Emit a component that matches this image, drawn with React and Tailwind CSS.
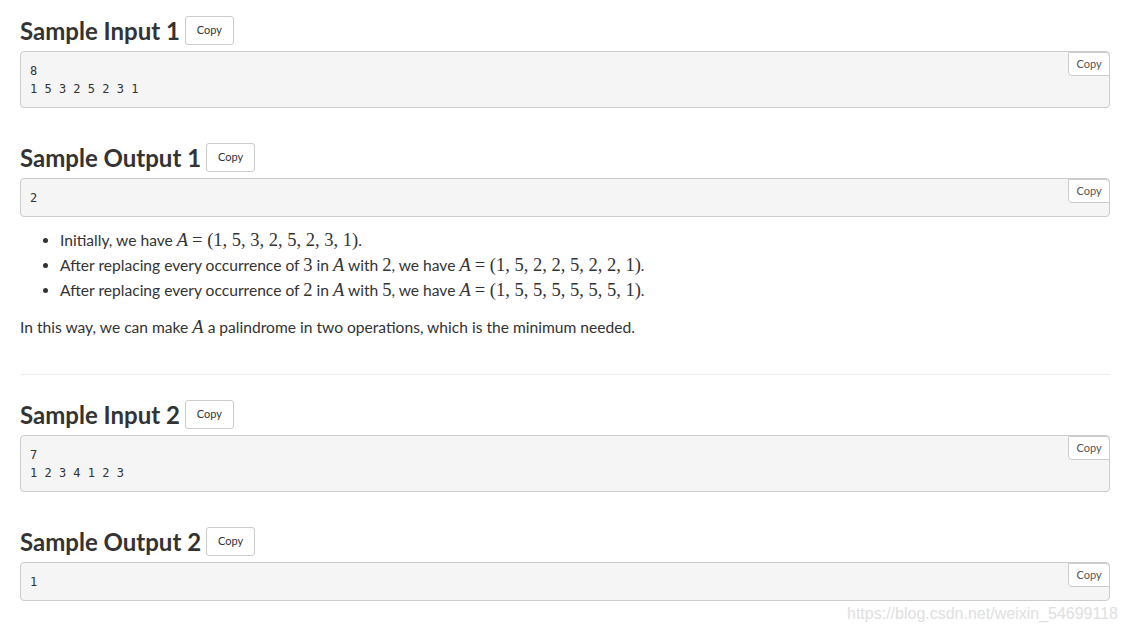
import React from "react";

const mathFont = { fontFamily: '"Liberation Serif", "DejaVu Serif", serif' };

const M = ({ children }) => (
    <span className="text-[18.5px] leading-none" style={mathFont}>
        {children}
    </span>
);

const V = ({ children }) => <i className="text-[18.5px] leading-none font-['Liberation_Serif',serif]">{children}</i>;

const CopyButton = () => (
    <button className="h-[29px] px-[11px] bg-white border border-[#cccccc] rounded-[3px] text-[11px] text-[#333333]">
        Copy
    </button>
);

const SampleBox = ({ lines }) => (
    <div className="relative mt-[6px] bg-[#f5f5f5] border border-[#cccccc] rounded-[4px] px-[9px] pt-[10px] pb-[9px]">
        <pre className="font-['DejaVu_Sans_Mono',monospace] text-[12px] leading-[18px] text-[#333333] m-0">
            {lines.join("\n")}
        </pre>
        <button className="absolute top-0 right-[-1px] h-[24px] w-[42px] bg-white border border-[#cccccc] rounded-tr-[4px] rounded-bl-[4px] text-[11px] text-[#555555]">
            Copy
        </button>
    </div>
);

const Section = ({ title, lines, className = "" }) => (
    <div className={className}>
        <div className="flex items-center gap-[5px]">
            <h3 className="text-[24px] font-bold leading-[29px] text-[#333333]">{title}</h3>
            <CopyButton />
        </div>
        <SampleBox lines={lines} />
    </div>
);

export default function App() {
    return (
        <div className="relative min-h-[631px] bg-white pl-[20px] pr-[18px] pt-[16px] font-['Lato',sans-serif] text-[#333333] overflow-hidden">
            <Section title="Sample Input 1" lines={["8", "1 5 3 2 5 2 3 1"]} />
            <Section className="mt-[35px]" title="Sample Output 1" lines={["2"]} />

            <ul className="mt-[11px] pl-[40px] list-disc text-[15.6px] leading-[25px]">
                <li>
                    Initially, we have <V>A</V> <M>= (1, 5, 3, 2, 5, 2, 3, 1)</M>.
                </li>
                <li>
                    After replacing every occurrence of <M>3</M> in <V>A</V> with <M>2</M>, we have <V>A</V>{" "}
                    <M>= (1, 5, 2, 2, 5, 2, 2, 1)</M>.
                </li>
                <li>
                    After replacing every occurrence of <M>2</M> in <V>A</V> with <M>5</M>, we have <V>A</V>{" "}
                    <M>= (1, 5, 5, 5, 5, 5, 5, 1)</M>.
                </li>
            </ul>
            <p className="mt-[12px] text-[15.6px] leading-[25px]">
                In this way, we can make <V>A</V> a palindrome in two operations, which is the minimum needed.
            </p>

            <hr className="mt-[34px] border-0 border-t border-[#eeeeee]" />

            <Section className="mt-[25px]" title="Sample Input 2" lines={["7", "1 2 3 4 1 2 3"]} />
            <Section className="mt-[35px]" title="Sample Output 2" lines={["1"]} />

            <div className="absolute left-[847px] top-[602px] font-['Liberation_Sans',sans-serif] text-[16px] text-[#e0e0e0] whitespace-nowrap">
                https://blog.csdn.net/weixin_54699118
            </div>
        </div>
    );
}
